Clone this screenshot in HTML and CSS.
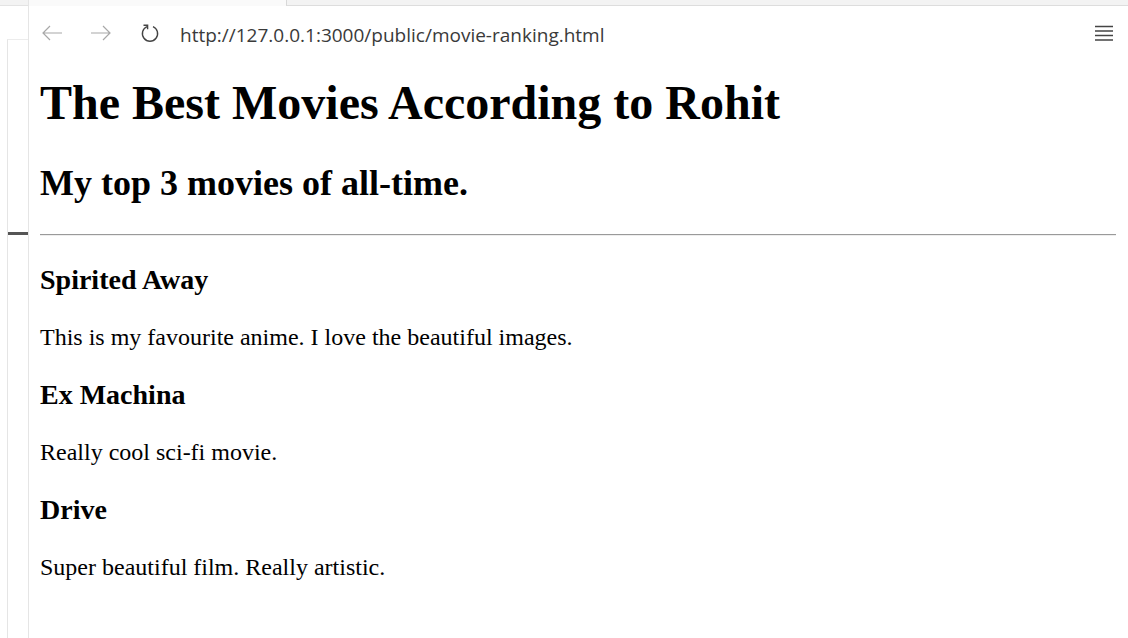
FILE: index.html
```html
<!DOCTYPE html>
<html>
<head>
<meta charset="utf-8">
<title>Movie Ranking</title>
<link rel="stylesheet" href="styles.css">
</head>
<body>
<div class="window">
  <div class="gutter">
    <div class="gutter-top"></div>
    <div class="gutter-box">
      <div class="gutter-mark"></div>
    </div>
  </div>
  <div class="panel">
    <div class="tabstrip">
      <div class="tab-light"></div>
      <div class="tab-gray"></div>
    </div>
    <div class="toolbar">
      <span class="nav-btn disabled">
        <svg width="22" height="16" viewBox="0 0 22 16"><path d="M21 8H2M9 1L2 8l7 7" fill="none" stroke="currentColor" stroke-width="1.2"/></svg>
      </span>
      <span class="nav-btn disabled">
        <svg width="22" height="16" viewBox="0 0 22 16"><path d="M1 8h19M13 1l7 7-7 7" fill="none" stroke="currentColor" stroke-width="1.2"/></svg>
      </span>
      <span class="nav-btn reload">
        <svg width="20" height="20" viewBox="0 0 20 20"><path d="M7 3.6A7.6 7.6 0 1 0 13 3.6" fill="none" stroke="currentColor" stroke-width="1.4"/><path d="M3.5 2.2H7.6V6.3" fill="none" stroke="currentColor" stroke-width="1.4"/></svg>
      </span>
      <span class="url">http://127.0.0.1:3000/public/movie-ranking.html</span>
      <span class="menu">
        <svg width="18" height="16" viewBox="0 0 18 16"><path d="M0 1.5h18M0 6h18M0 10.5h18M0 15h18" stroke="currentColor" stroke-width="1.5"/></svg>
      </span>
    </div>
    <div class="page">
      <h1 class="title">The Best Movies According to Rohit</h1>
      <h2 class="subtitle">My top 3 movies of all-time.</h2>
      <hr class="rule">
      <h3 class="movie">Spirited Away</h3>
      <p class="note">This is my favourite anime. I love the beautiful images.</p>
      <h3 class="movie">Ex Machina</h3>
      <p class="note">Really cool sci-fi movie.</p>
      <h3 class="movie">Drive</h3>
      <p class="note">Super beautiful film. Really artistic.</p>
    </div>
  </div>
</div>
</body>
</html>
```

FILE: styles.css
```css
html, body {
  margin: 0;
  padding: 0;
  background: #ffffff;
}

.window {
  display: flex;
  width: 1128px;
  height: 638px;
  overflow: hidden;
}

.gutter {
  width: 28px;
  flex: none;
  border-right: 1px solid #e5e5e5;
  display: flex;
  flex-direction: column;
}

.gutter-top {
  height: 5px;
  background: #f3f3f3;
  border-bottom: 1px solid #e3e3e3;
}

.gutter-box {
  flex: 1;
  margin-top: 33px;
  margin-left: 7px;
  border-left: 1px solid #e5e5e5;
  border-top: 1px solid #ececec;
}

.gutter-mark {
  margin-top: 192px;
  height: 3px;
  background: #555555;
}

.panel {
  flex: 1;
  display: flex;
  flex-direction: column;
  min-width: 0;
}

.tabstrip {
  display: flex;
  height: 6px;
}

.tab-light {
  width: 257px;
  background: #fafafa;
}

.tab-gray {
  flex: 1;
  background: #f3f3f3;
  border-left: 1px solid #d8d8d8;
  border-bottom: 1px solid #dddddd;
}

.toolbar {
  box-sizing: border-box;
  height: 37px;
  display: flex;
  align-items: center;
  padding: 17px 15px 0 12px;
  font-family: "Open Sans", "Noto Sans", sans-serif;
}

.nav-btn {
  display: flex;
  align-items: center;
  justify-content: center;
  width: 22px;
  margin-right: 27px;
  color: #444444;
}

.nav-btn.disabled {
  color: #a8a8a8;
}

.nav-btn.reload {
  margin-right: 19px;
}

.url {
  flex: 1;
  font-size: 19px;
  line-height: 20px;
  color: #3a3a3a;
  white-space: nowrap;
  padding-top: 3px;
}

.menu {
  display: flex;
  color: #444444;
}

.page {
  flex: 1;
  padding: 0 12px 0 11px;
  font-family: "Liberation Serif", "Times New Roman", serif;
  color: #000000;
  font-size: 24px;
  display: flow-root;
}

.title {
  font-size: 48px;
  font-weight: bold;
  margin: 32px 0;
}

.subtitle {
  font-size: 36px;
  font-weight: bold;
  margin: 30px 0;
}

.rule {
  margin: 12px 0;
  border: 0;
  border-top: 1px solid #9a9a9a;
  border-bottom: 1px solid #eeeeee;
}

.movie {
  font-size: 28px;
  font-weight: bold;
  margin: 28px 0;
}

.note {
  font-size: 24px;
  margin: 24px 0;
}
```
